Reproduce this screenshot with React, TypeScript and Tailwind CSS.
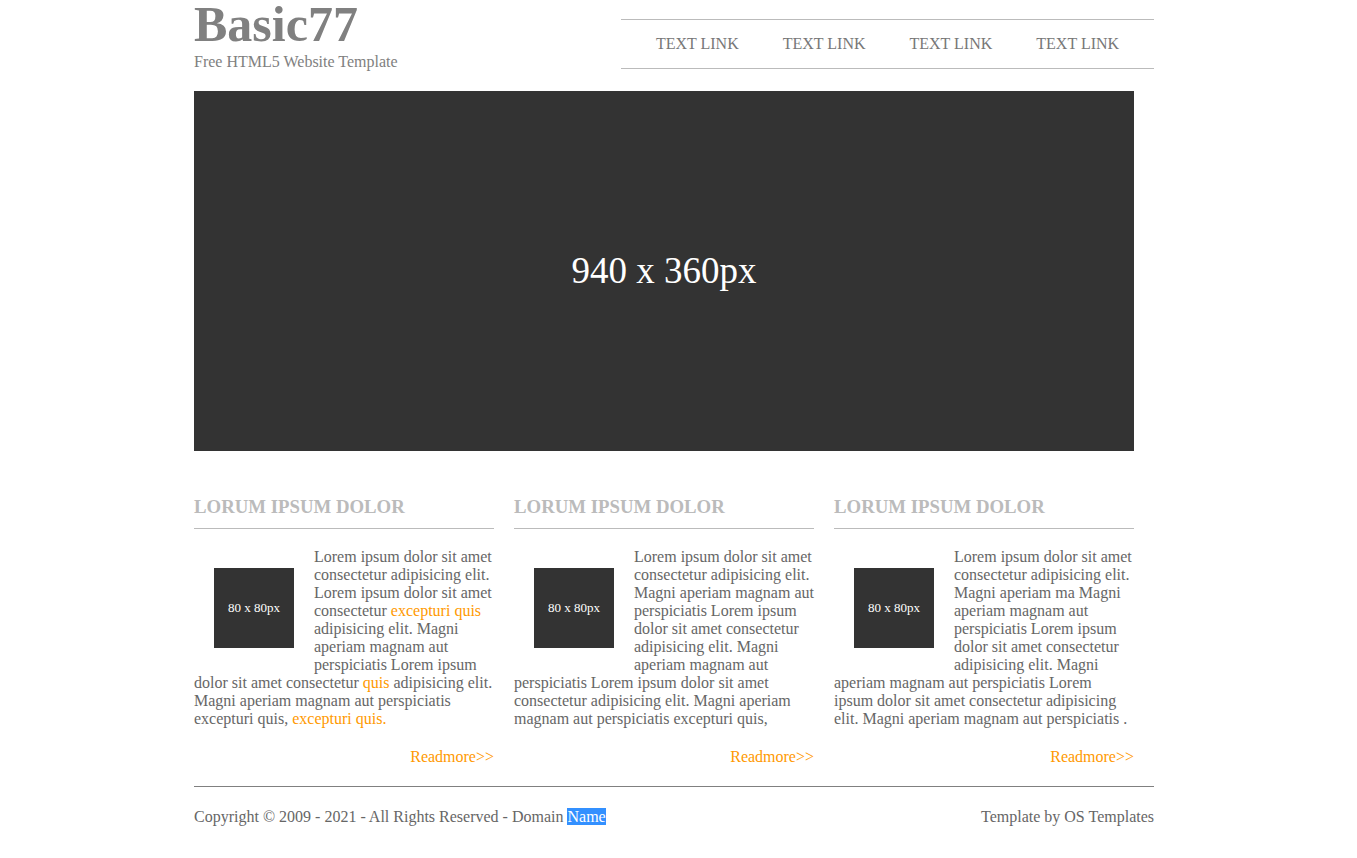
const serif = { fontFamily: '"Liberation Serif", "Times New Roman", serif' };

type Part = string | { o: string };

const columns: Part[][] = [
  [
    "Lorem ipsum dolor sit amet consectetur adipisicing elit. Lorem ipsum dolor sit amet consectetur ",
    { o: "excepturi quis" },
    " adipisicing elit. Magni aperiam magnam aut perspiciatis Lorem ipsum dolor sit amet consectetur ",
    { o: "quis" },
    " adipisicing elit. Magni aperiam magnam aut perspiciatis excepturi quis, ",
    { o: "excepturi quis." },
  ],
  [
    "Lorem ipsum dolor sit amet consectetur adipisicing elit. Magni aperiam magnam aut perspiciatis Lorem ipsum dolor sit amet consectetur adipisicing elit. Magni aperiam magnam aut perspiciatis Lorem ipsum dolor sit amet consectetur adipisicing elit. Magni aperiam magnam aut perspiciatis excepturi quis,",
  ],
  [
    "Lorem ipsum dolor sit amet consectetur adipisicing elit. Magni aperiam ma Magni aperiam magnam aut perspiciatis Lorem ipsum dolor sit amet consectetur adipisicing elit. Magni aperiam magnam aut perspiciatis Lorem ipsum dolor sit amet consectetur adipisicing elit. Magni aperiam magnam aut perspiciatis .",
  ],
];

const links = ["TEXT LINK", "TEXT LINK", "TEXT LINK", "TEXT LINK"];

export default function App() {
  return (
    <div className="min-h-screen bg-white" style={serif}>
      <div className="ml-[194px] w-[960px] pb-8">
        {/* header */}
        <header className="flex items-start justify-between h-[69px]">
          <div>
            <h1 className="text-[50px] leading-[48px] font-bold text-[#808080]">Basic77</h1>
            <p className="mt-[5px] text-[16px] leading-[18px] text-[#808080]">Free HTML5 Website Template</p>
          </div>
          <nav className="mt-[19px] w-[533px] h-[50px] border-y border-[#bbb] flex items-center justify-center gap-[44px]">
            {links.map((l, i) => (
              <a key={i} href="#" className="text-[16px] leading-[18px] text-[#777]">
                {l}
              </a>
            ))}
          </nav>
        </header>

        {/* hero */}
        <div className="mt-[22px] w-[940px] h-[360px] bg-[#333] flex items-center justify-center">
          <span className="text-white text-[37px]">940 x 360px</span>
        </div>

        {/* columns */}
        <div className="mt-[44px] flex gap-[20px]">
          {columns.map((parts, i) => (
            <section key={i} className="w-[300px]">
              <h2 className="text-[18.8px] leading-[22px] font-bold text-[#bbb] pb-[10px] border-b border-[#bbb] pt-px">
                LORUM IPSUM DOLOR
              </h2>
              <div className="mt-[19px] text-[16px] leading-[18px] text-[#666]">
                <div className="float-left m-[20px] w-[80px] h-[80px] bg-[#333] flex items-center justify-center text-white text-[13px]">
                  80 x 80px
                </div>
                <p>
                  {parts.map((p, j) =>
                    typeof p === "string" ? (
                      <span key={j}>{p}</span>
                    ) : (
                      <a key={j} href="#" className="text-[#f90]">
                        {p.o}
                      </a>
                    )
                  )}
                </p>
              </div>
              <div className="clear-both mt-[20px] text-right text-[16px] leading-[18px]">
                <a href="#" className="text-[#f90]">Readmore&gt;&gt;</a>
              </div>
            </section>
          ))}
        </div>

        {/* footer */}
        <footer className="mt-[20px] border-t border-[#808080] pt-[21px] flex justify-between text-[16px] leading-[18px] text-[#666]">
          <p>
            Copyright © 2009 - 2021 - All Rights Reserved - Domain{" "}
            <span className="bg-[#3390ff] text-white">Name</span>
          </p>
          <p>Template by OS Templates</p>
        </footer>
      </div>
    </div>
  );
}
